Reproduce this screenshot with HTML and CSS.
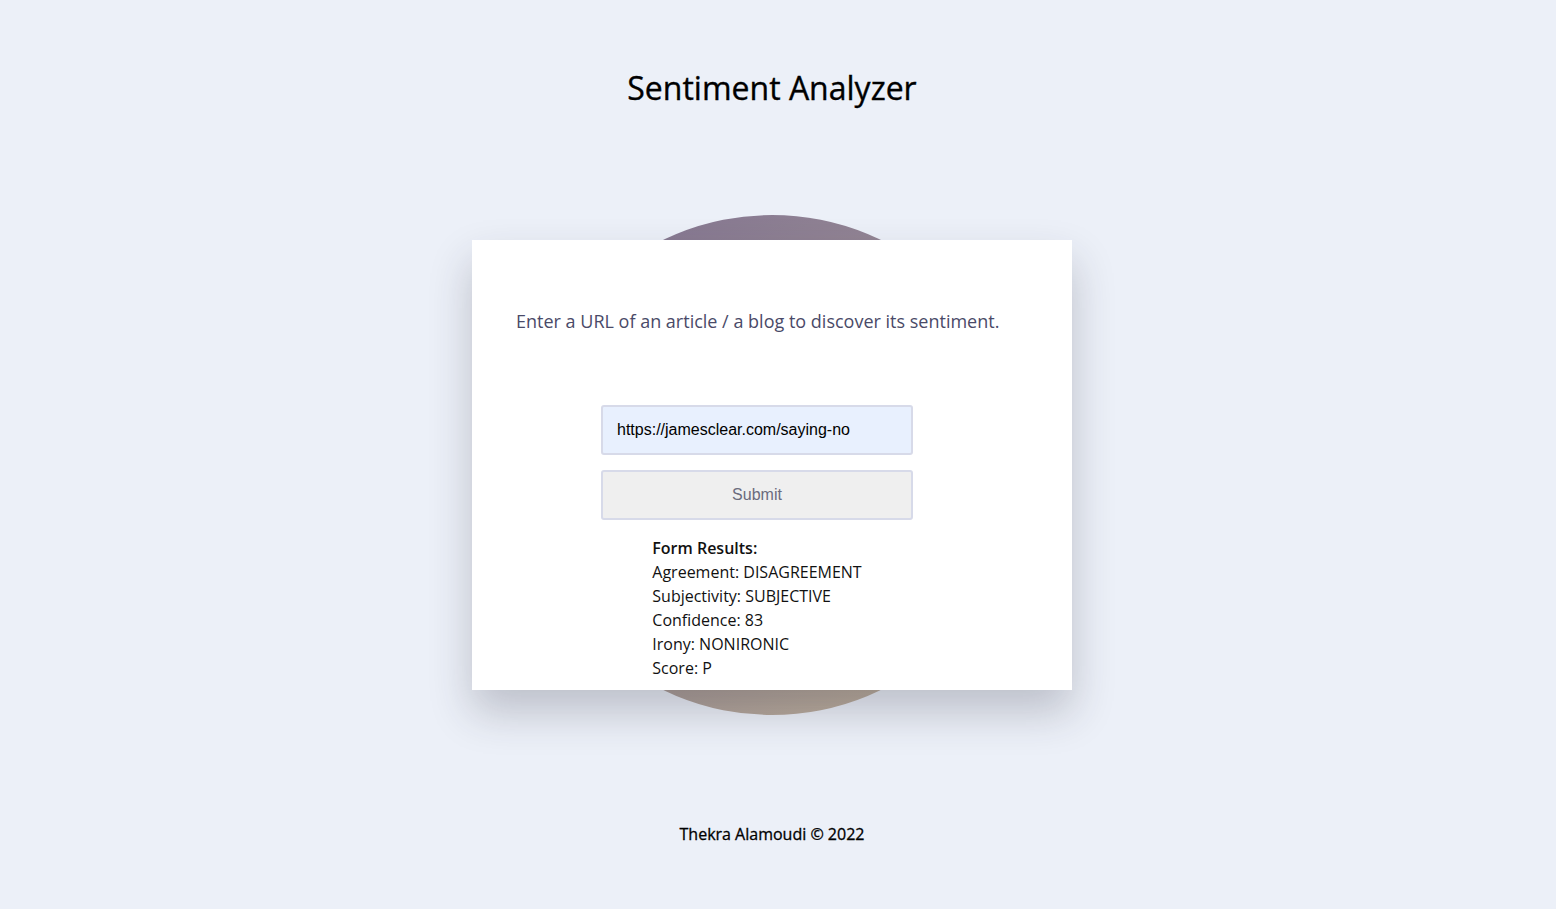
FILE: index.html
```html
<!DOCTYPE html>
<html lang="en">
<head>
<meta charset="utf-8">
<title>Sentiment Analyzer</title>
<link rel="stylesheet" href="styles.css">
</head>
<body>
<header class="site-header">
  <h1 class="site-title">Sentiment Analyzer</h1>
</header>
<main class="stage">
  <div class="blob"></div>
  <section class="card">
    <p class="intro">Enter a URL of an article / a blog to discover its sentiment.</p>
    <form class="url-form">
      <input class="url-input" type="text" value="https://jamesclear.com/saying-no">
      <button class="submit-btn" type="button">Submit</button>
    </form>
    <div class="results">
      <div class="results-title">Form Results:</div>
      <div>Agreement: DISAGREEMENT</div>
      <div>Subjectivity: SUBJECTIVE</div>
      <div>Confidence: 83</div>
      <div>Irony: NONIRONIC</div>
      <div>Score: P</div>
    </div>
  </section>
</main>
<footer class="site-footer">Thekra Alamoudi © 2022</footer>
</body>
</html>
```
FILE: styles.css
```css
* { box-sizing: border-box; }
html, body { margin: 0; padding: 0; }
body {
  background: #ecf0f8;
  font-family: "Open Sans", "Liberation Sans", sans-serif;
  color: #111;
  width: 1544px;
  min-height: 909px;
}
.site-header {
  display: flex;
  justify-content: center;
  padding-top: 66px;
}
.site-title {
  margin: 0;
  font-size: 32px;
  line-height: 44px;
  font-weight: 400;
  color: #000;
  -webkit-text-stroke: 0.35px #000;
}
.stage {
  position: relative;
  display: flex;
  justify-content: center;
  align-items: center;
  height: 500px;
  margin-top: 105px;
}
.blob {
  position: absolute;
  left: 522px;
  top: 0;
  width: 500px;
  height: 500px;
  border-radius: 50%;
  background: linear-gradient(145deg, #7f7090 0%, #9a8d95 45%, #c6b79e 100%);
}
.card {
  position: relative;
  width: 600px;
  height: 450px;
  background: #fff;
  box-shadow: 0 22px 40px rgba(40, 40, 60, 0.24);
  padding: 68px 74px 10px 44px;
  display: flex;
  flex-direction: column;
  align-items: center;
}
.intro {
  margin: 0;
  font-size: 18px;
  line-height: 27px;
  color: #4a4a68;
  font-weight: 400;
  white-space: nowrap;
  align-self: flex-start;
}
.url-form {
  display: flex;
  flex-direction: column;
  gap: 15px;
  margin-top: 70px;
}
.url-input,
.submit-btn {
  width: 312px;
  height: 50px;
  border: 2px solid #d7dae9;
  border-radius: 3px;
  font-family: "Liberation Sans", Arial, sans-serif;
  font-size: 16px;
}
.url-input {
  background: #e8f0fe;
  color: #000;
  padding: 0 14px;
  outline: none;
}
.submit-btn {
  background: #efefef;
  color: #6b6b7d;
}
.results {
  margin-top: 16px;
  font-size: 16px;
  line-height: 24px;
  color: #111;
}
.results-title {
  font-weight: 600;
}
.site-footer {
  text-align: center;
  margin-top: 107px;
  font-size: 16px;
  line-height: 24px;
  font-weight: 400;
  color: #000;
  -webkit-text-stroke: 0.3px #000;
}
```
